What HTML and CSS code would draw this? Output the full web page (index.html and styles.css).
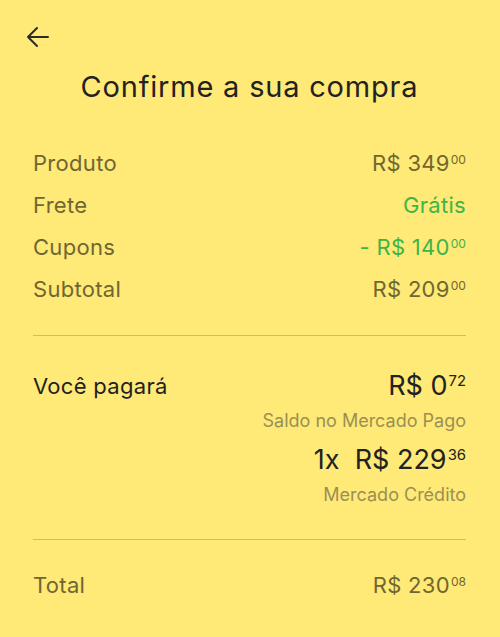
FILE: index.html
```html
<!DOCTYPE html>
<html lang="pt-BR">

<head>
    <meta charset="UTF-8">
    <meta name="viewport" content="width=device-width, initial-scale=1.0">
    <title>Confirme a sua compra</title>
    <link rel="stylesheet" href="styles.css">
</head>

<body>

    <div class="screen">
        <div class="topbar">
            <button class="back" aria-label="Voltar">
                <svg width="24" height="24" viewBox="0 0 24 24">
                    <path d="M23 12H3M12 3l-9 9 9 9" fill="none" stroke="#2b2b2b" stroke-width="2" stroke-linecap="round" stroke-linejoin="round"/>
                </svg>
            </button>
        </div>

        <h1>Confirme a sua compra</h1>

        <div class="summary">
            <div class="row">
                <span>Produto</span>
                <span class="price">R$ 349<sup>00</sup></span>
            </div>
            <div class="row">
                <span>Frete</span>
                <span class="green">Grátis</span>
            </div>
            <div class="row">
                <span>Cupons</span>
                <span class="price green">- R$ 140<sup>00</sup></span>
            </div>
            <div class="row">
                <span>Subtotal</span>
                <span class="price">R$ 209<sup>00</sup></span>
            </div>
        </div>

        <hr>

        <div class="payment">
            <div class="pay-label">Você pagará</div>
            <div class="methods">
                <div class="method">
                    <div class="amount">R$ 0<sup>72</sup></div>
                    <div class="source">Saldo no Mercado Pago</div>
                </div>
                <div class="method">
                    <div class="amount">1x&nbsp; R$ 229<sup>36</sup></div>
                    <div class="source">Mercado Crédito</div>
                </div>
            </div>
        </div>

        <hr>

        <div class="row total">
            <span>Total</span>
            <span class="price">R$ 230<sup>08</sup></span>
        </div>
    </div>

</body>

</html>
```

FILE: styles.css
```css
body {
    margin: 0;
    background-color: #ffe977;
    font-family: Inter, 'Open Sans', sans-serif;
    color: #222;
}

.screen {
    width: 500px;
    height: 637px;
    box-sizing: border-box;
    padding: 0 34px 0 33px;
}

.topbar {
    padding-top: 25px;
    height: 24px;
    margin-left: -8px;
}

.back {
    background: none;
    border: none;
    padding: 0;
    display: flex;
    cursor: pointer;
}

h1 {
    margin: 21px 0 38px;
    text-align: center;
    font-size: 29px;
    line-height: 34px;
    font-weight: 400;
    letter-spacing: 0.8px;
    color: #222;
}

.summary {
    display: flex;
    flex-direction: column;
}

.row {
    display: flex;
    justify-content: space-between;
    align-items: baseline;
    height: 42px;
    line-height: 42px;
    font-size: 22px;
    letter-spacing: 0.3px;
    color: #6f6731;
}

sup {
    font-size: 0.55em;
    line-height: 0;
    vertical-align: 0.6em;
    margin-left: 1px;
    letter-spacing: 0;
}

.green {
    color: #3cb54a;
}

hr {
    border: none;
    border-top: 1px solid #cdbf66;
    margin: 25px 0 0;
}

.payment {
    display: flex;
    justify-content: space-between;
    padding: 34px 0 33px;
}

.pay-label {
    font-size: 22px;
    line-height: 32px;
    letter-spacing: 0.3px;
    color: #222;
}

.methods {
    display: flex;
    flex-direction: column;
    align-items: flex-end;
    gap: 12px;
}

.method {
    display: flex;
    flex-direction: column;
    align-items: flex-end;
}

.amount {
    font-size: 27px;
    line-height: 32px;
    color: #222;
}

.source {
    margin-top: 8px;
    font-size: 18px;
    line-height: 22px;
    color: #9a9053;
}

.payment + hr {
    margin-top: 0;
}

.total {
    margin-top: 24px;
}
```
